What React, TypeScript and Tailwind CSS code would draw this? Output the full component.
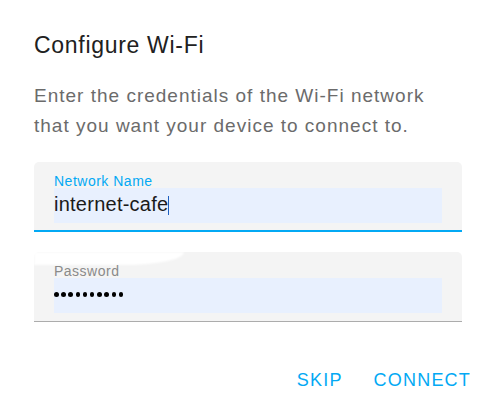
import React from 'react';

const font = { fontFamily: '"Liberation Sans", Arial, sans-serif' };

export default function App() {
  return (
    <div className="w-[495px] h-[417px] bg-white overflow-hidden" style={font}>
      <div className="pl-[34px] pr-[33px] pt-[31px]">
        <h2 className="text-[23px] leading-[28px] tracking-[0.7px] text-[#212121] font-normal">
          Configure Wi-Fi
        </h2>
        <p className="mt-[22px] text-[19px] leading-[30px] tracking-[1px] text-[#6b6b6b]">
          Enter the credentials of the Wi-Fi network that you want your device to connect to.
        </p>

        {/* network name field (focused) */}
        <div className="mt-[21px] bg-[#f4f4f4] rounded-t-[5px] border-b-2 border-[#03a9f4] px-[20px] pt-[13px] pb-[7px]">
          <div className="text-[14px] leading-[13px] tracking-[0.5px] text-[#03a9f4]">Network Name</div>
          <div className="h-[35px] bg-[#e8f0fe] flex items-start">
            <span className="text-[20px] leading-[32px] tracking-[0.25px] text-[#1a1a1a]">internet-cafe</span>
            <span className="w-px h-[19px] mt-[8px] bg-[#1e5fbf]" />
          </div>
        </div>

        {/* password field */}
        <div className="relative mt-[20px] bg-[#f4f4f4] rounded-t-[5px] border-b border-[#acacac] px-[20px] pt-[13px] pb-[8px]">
          <div className="absolute left-0 top-0 w-[150px] h-[13px] bg-white rounded-br-[60px_13px] blur-[1px]" />
          <div className="relative text-[14px] leading-[13px] tracking-[0.5px] text-[#8a8a8a]">Password</div>
          <div className="h-[35px] bg-[#e8f0fe] flex items-center gap-[2.7px] pb-[2px]">
            {Array.from({ length: 10 }).map((_, i) => (
              <span key={i} className="w-[4.5px] h-[4.5px] rounded-full bg-black" />
            ))}
          </div>
        </div>
      </div>

      <div className="mt-[40px] flex justify-end gap-[31px] pr-[24px]">
        <button className="h-[36px] text-[18px] leading-[36px] tracking-[1.2px] text-[#03a9f4]">SKIP</button>
        <button className="h-[36px] text-[18px] leading-[36px] tracking-[1.2px] text-[#03a9f4]">CONNECT</button>
      </div>
    </div>
  );
}
